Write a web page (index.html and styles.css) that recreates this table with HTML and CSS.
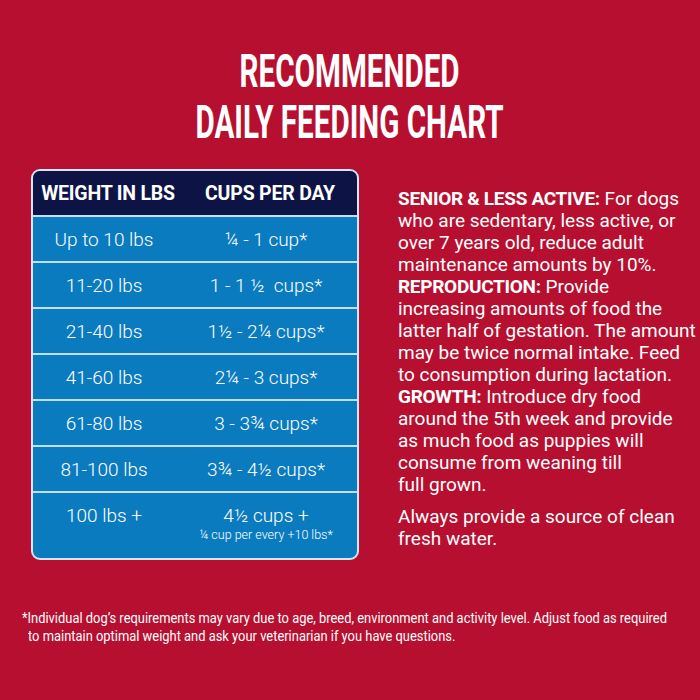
FILE: index.html
```html
<!DOCTYPE html>
<html>
<head>
<meta charset="utf-8">
<link rel="stylesheet" href="styles.css">
</head>
<body>
<div class="page">
  <h1 class="title"><span>RECOMMENDED</span><span>DAILY FEEDING CHART</span></h1>
  <div class="main">
    <div class="chart">
      <div class="row head"><div class="c">WEIGHT IN LBS</div><div class="c">CUPS PER DAY</div></div>
      <div class="row"><div class="c">Up to 10 lbs</div><div class="c">¼ - 1 cup*</div></div>
      <div class="row"><div class="c">11-20 lbs</div><div class="c">1 - 1 ½&nbsp; cups*</div></div>
      <div class="row"><div class="c">21-40 lbs</div><div class="c">1½ - 2¼ cups*</div></div>
      <div class="row"><div class="c">41-60 lbs</div><div class="c">2¼ - 3 cups*</div></div>
      <div class="row"><div class="c">61-80 lbs</div><div class="c">3 - 3¾ cups*</div></div>
      <div class="row"><div class="c">81-100 lbs</div><div class="c">3¾ - 4½ cups*</div></div>
      <div class="row last"><div class="c">100 lbs +</div><div class="c">4½ cups +<small>¼ cup per every +10 lbs*</small></div></div>
    </div>
    <div class="notes">
      <p><b>SENIOR &amp; LESS ACTIVE:</b> For dogs<br>who are sedentary, less active, or<br>over 7 years old, reduce adult<br>maintenance amounts by 10%.<br><b>REPRODUCTION:</b> Provide<br>increasing amounts of food the<br>latter half of gestation. The amount<br>may be twice normal intake. Feed<br>to consumption during lactation.<br><b>GROWTH:</b> Introduce dry food<br>around the 5th week and provide<br>as much food as puppies will<br>consume from weaning till<br>full grown.</p>
      <p>Always provide a source of clean<br>fresh water.</p>
    </div>
  </div>
  <p class="foot"><span>*Individual dog’s requirements may vary due to age, breed, environment and activity level. Adjust food as required</span><span class="l2">to maintain optimal weight and ask your veterinarian if you have questions.</span></p>
</div>
</body>
</html>
```
FILE: styles.css
```css
* { box-sizing: border-box; }
html, body { margin: 0; padding: 0; }
body {
  width: 700px; height: 700px;
  background: #b70f30;
  color: #fff;
  font-family: "Roboto", "Liberation Sans", sans-serif;
  overflow: hidden;
}
.page { padding-top: 45px; }
.title {
  margin: 0;
  display: flex; flex-direction: column; align-items: center;
  font-size: 47px; line-height: 51px; font-weight: bold;
}
.title span {
  display: inline-block;
  transform: scaleX(0.63);
  white-space: nowrap;
}
.main {
  display: flex;
  margin-top: 22px;
  padding-left: 31px;
}
.chart {
  flex: none;
  width: 328px;
  border: 2px solid #d3e6f4;
  border-radius: 9px;
  overflow: hidden;
  background: #0b7bc0;
}
.row {
  display: grid;
  grid-template-columns: 142px 1fr;
  height: 46px;
  align-items: center;
  border-top: 2px solid #c4def1;
  font-size: 19px;
  font-weight: 300;
}
.row .c { text-align: center; white-space: nowrap; }
.row.head {
  border-top: none;
  background: #0d1445;
  height: 44px;
  font-weight: bold;
  font-size: 19.5px;
  letter-spacing: -0.2px;
  grid-template-columns: 150px 1fr;
}
.row.last { height: 60px; align-items: start; padding-top: 11px; }
.row.last small { display: block; font-size: 12.5px; line-height: 14px; margin-top: 1px; }
.notes {
  margin-left: 39px;
  margin-top: 19px;
  font-size: 19px;
  line-height: 22px;
  white-space: nowrap;
}
.notes b { font-weight: bold; letter-spacing: -0.3px; }
.notes p { margin: 0 0 10px; }
.foot {
  margin: 50px 0 0 22px;
  font-size: 14.5px;
  line-height: 18px;
  display: flex; flex-direction: column; align-items: flex-start;
}
.foot span {
  display: inline-block;
  white-space: nowrap;
  transform: scaleX(0.89);
  transform-origin: left center;
}
.foot .l2 { margin-left: 6px; }
```
